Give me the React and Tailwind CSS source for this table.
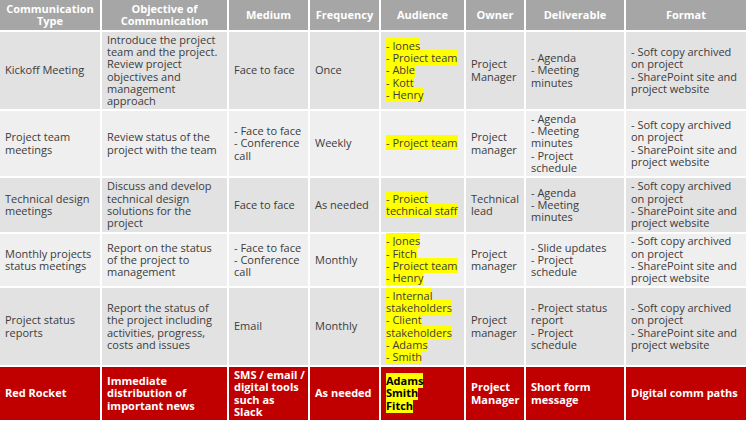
import React from "react";

const hl = "bg-[#ffff00]";

function Aud({ items, bold }) {
  return (
    <div className={bold ? "font-bold text-black whitespace-nowrap" : "whitespace-nowrap"}>
      {items.map((t, i) => (
        <div key={i}>
          <span className={hl}>{t}</span>
        </div>
      ))}
    </div>
  );
}

function Lines({ items }) {
  return (
    <div className="whitespace-nowrap">
      {items.map((t, i) => (
        <div key={i}>{t}</div>
      ))}
    </div>
  );
}

const rows = [
  {
    bg: "bg-[#e2e2e2]",
    cells: [
      "Kickoff Meeting",
      "Introduce the project team and the project. Review project objectives and management approach",
      "Face to face",
      "Once",
      <Aud items={["- Jones", "- Project team", "- Able", "- Kott", "- Henry"]} />,
      "Project Manager",
      <Lines items={["- Agenda", "- Meeting", "minutes"]} />,
      <Lines items={["- Soft copy archived", "on project", "- SharePoint site and", "project website"]} />,
    ],
  },
  {
    bg: "bg-[#efefef]",
    cells: [
      "Project team meetings",
      "Review status of the project with the team",
      <Lines items={["- Face to face", "- Conference", "call"]} />,
      "Weekly",
      <Aud items={["- Project team"]} />,
      "Project manager",
      <Lines items={["- Agenda", "- Meeting", "minutes", "- Project", "schedule"]} />,
      <Lines items={["- Soft copy archived", "on project", "- SharePoint site and", "project website"]} />,
    ],
  },
  {
    bg: "bg-[#e2e2e2]",
    cells: [
      "Technical design meetings",
      "Discuss and develop technical design solutions for the project",
      "Face to face",
      "As needed",
      <Aud items={["- Project", "technical staff"]} />,
      "Technical lead",
      <Lines items={["- Agenda", "- Meeting", "minutes"]} />,
      <Lines items={["- Soft copy archived", "on project", "- SharePoint site and", "project website"]} />,
    ],
  },
  {
    bg: "bg-[#efefef]",
    cells: [
      "Monthly projects status meetings",
      "Report on the status of the project to management",
      <Lines items={["- Face to face", "- Conference", "call"]} />,
      "Monthly",
      <Aud items={["- Jones", "- Fitch", "- Project team", "- Henry"]} />,
      "Project manager",
      <Lines items={["- Slide updates", "- Project", "schedule"]} />,
      <Lines items={["- Soft copy archived", "on project", "- SharePoint site and", "project website"]} />,
    ],
  },
  {
    bg: "bg-[#e2e2e2]",
    cells: [
      "Project status reports",
      "Report the status of the project including activities, progress, costs and issues",
      "Email",
      "Monthly",
      <Aud
        items={["- Internal", "stakeholders", "- Client", "stakeholders", "- Adams", "- Smith"]}
      />,
      "Project manager",
      <Lines items={["- Project status", "report", "- Project", "schedule"]} />,
      <Lines items={["- Soft copy archived", "on project", "- SharePoint site and", "project website"]} />,
    ],
  },
];

const headers = [
  "Communication Type",
  "Objective of Communication",
  "Medium",
  "Frequency",
  "Audience",
  "Owner",
  "Deliverable",
  "Format",
];

export default function App() {
  return (
    <div
      className="w-[748px] h-[424px] bg-white overflow-hidden"
      style={{ fontFamily: '"Open Sans", "DejaVu Sans", sans-serif' }}
    >
      <div className="grid w-[746px] grid-cols-[100px_125px_79px_69px_83px_58px_98px_120px] grid-rows-[30px_77px_65px_54px_52px_77px_53px] gap-[2px] text-[11px] leading-[12.3px]">
        {headers.map((h, i) => (
          <div
            key={i}
            className="bg-[#a6a6a6] text-white font-bold flex items-center justify-center text-center px-[3px] text-[11px] leading-[12px]"
          >
            {h}
          </div>
        ))}
        {rows.map((r, ri) =>
          r.cells.map((c, ci) => (
            <div
              key={ri + "-" + ci}
              className={`${r.bg} text-[#3c3c3c] flex items-center px-[5px]`}
            >
              <div>{c}</div>
            </div>
          ))
        )}
        {[
          "Red Rocket",
          <Lines items={["Immediate", "distribution of", "important news"]} />,
          <Lines items={["SMS / email /", "digital tools", "such as", "Slack"]} />,
          "As needed",
          <Aud items={["Adams", "Smith", "Fitch"]} bold />,
          <Lines items={["Project", "Manager"]} />,
          <Lines items={["Short form", "message"]} />,
          "Digital comm paths",
        ].map((c, ci) => (
          <div
            key={"red-" + ci}
            className="bg-[#c00000] text-white font-bold flex items-center px-[5px]"
          >
            <div>{c}</div>
          </div>
        ))}
      </div>
    </div>
  );
}
